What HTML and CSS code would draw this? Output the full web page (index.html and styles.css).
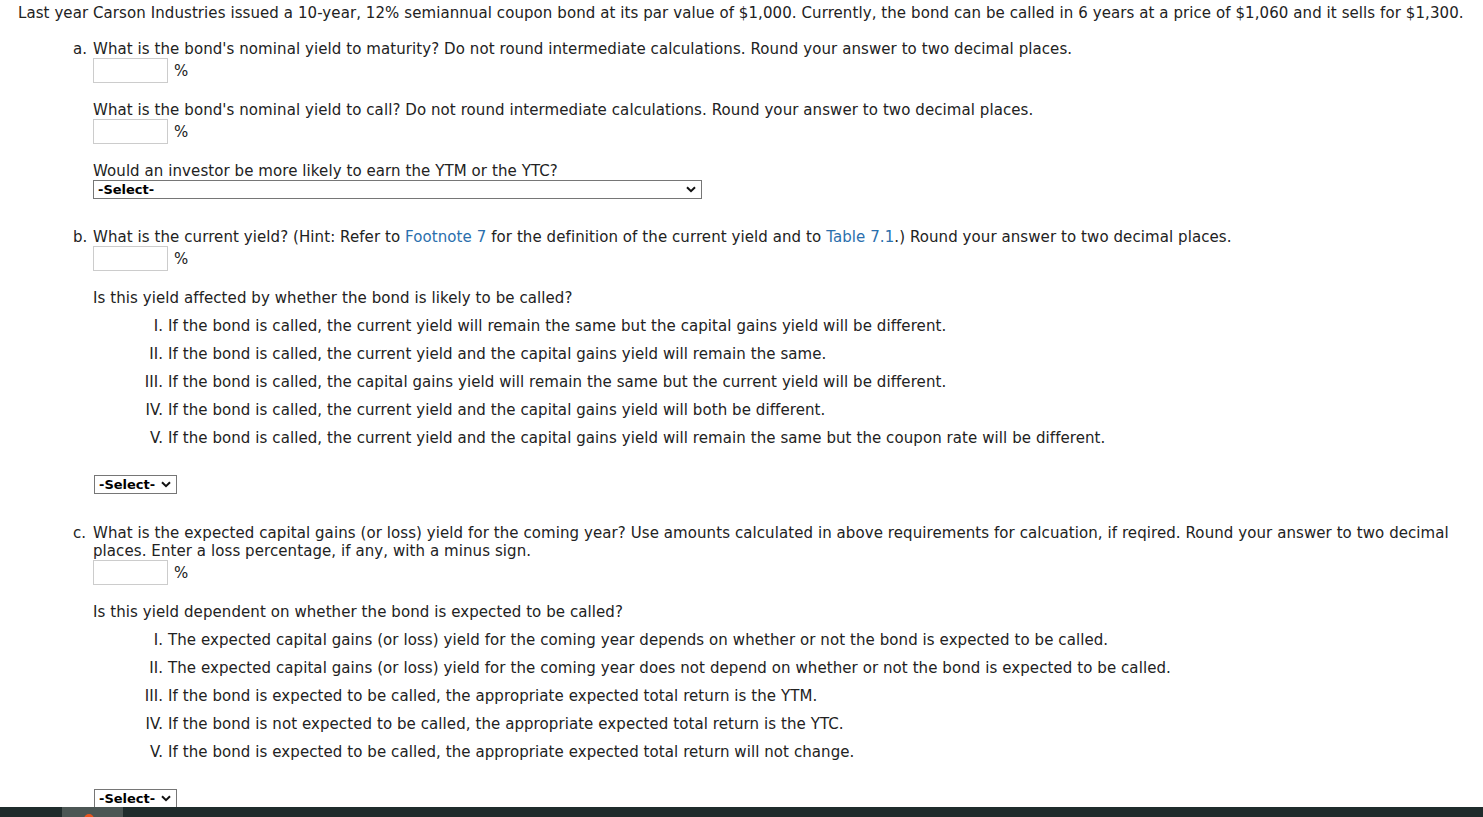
FILE: index.html
```html
<!DOCTYPE html>
<html lang="en">
<head>
<meta charset="utf-8">
<title>Bond yields</title>
<link rel="stylesheet" href="styles.css">
</head>
<body>
<div class="page">
  <p class="intro">Last year Carson Industries issued a 10-year, 12% semiannual coupon bond at its par value of $1,000. Currently, the bond can be called in 6 years at a price of $1,060 and it sells for $1,300.</p>

  <div class="part">
    <span class="label">a.</span>
    <div class="body">
      <p class="q">What is the bond's nominal yield to maturity? Do not round intermediate calculations. Round your answer to two decimal places.</p>
      <div class="answer"><input type="text" class="num"><span class="pct">%</span></div>

      <p class="q gap">What is the bond's nominal yield to call? Do not round intermediate calculations. Round your answer to two decimal places.</p>
      <div class="answer"><input type="text" class="num"><span class="pct">%</span></div>

      <p class="q gap">Would an investor be more likely to earn the YTM or the YTC?</p>
      <span class="sel-wrap wide">
        <select class="sel"><option>-Select-</option></select>
        <svg class="chev" width="10" height="7" viewBox="0 0 10 7"><path d="M1 1.2 L5 5.2 L9 1.2" fill="none" stroke="#111" stroke-width="2"/></svg>
      </span>
    </div>
  </div>

  <div class="part b-part">
    <span class="label">b.</span>
    <div class="body">
      <p class="q">What is the current yield? (Hint: Refer to <a href="#" class="link">Footnote 7</a> for the definition of the current yield and to <a href="#" class="link">Table 7.1</a>.) Round your answer to two decimal places.</p>
      <div class="answer"><input type="text" class="num"><span class="pct">%</span></div>

      <p class="q gap">Is this yield affected by whether the bond is likely to be called?</p>
      <ol class="opts">
        <li>If the bond is called, the current yield will remain the same but the capital gains yield will be different.</li>
        <li>If the bond is called, the current yield and the capital gains yield will remain the same.</li>
        <li>If the bond is called, the capital gains yield will remain the same but the current yield will be different.</li>
        <li>If the bond is called, the current yield and the capital gains yield will both be different.</li>
        <li>If the bond is called, the current yield and the capital gains yield will remain the same but the coupon rate will be different.</li>
      </ol>
      <span class="sel-wrap small">
        <select class="sel"><option>-Select-</option></select>
        <svg class="chev" width="10" height="7" viewBox="0 0 10 7"><path d="M1 1.2 L5 5.2 L9 1.2" fill="none" stroke="#111" stroke-width="2"/></svg>
      </span>
    </div>
  </div>

  <div class="part c-part">
    <span class="label">c.</span>
    <div class="body">
      <p class="q">What is the expected capital gains (or loss) yield for the coming year? Use amounts calculated in above requirements for calcuation, if reqired. Round your answer to two decimal places. Enter a loss percentage, if any, with a minus sign.</p>
      <div class="answer"><input type="text" class="num"><span class="pct">%</span></div>

      <p class="q gap">Is this yield dependent on whether the bond is expected to be called?</p>
      <ol class="opts">
        <li>The expected capital gains (or loss) yield for the coming year depends on whether or not the bond is expected to be called.</li>
        <li>The expected capital gains (or loss) yield for the coming year does not depend on whether or not the bond is expected to be called.</li>
        <li>If the bond is expected to be called, the appropriate expected total return is the YTM.</li>
        <li>If the bond is not expected to be called, the appropriate expected total return is the YTC.</li>
        <li>If the bond is expected to be called, the appropriate expected total return will not change.</li>
      </ol>
      <span class="sel-wrap small">
        <select class="sel"><option>-Select-</option></select>
        <svg class="chev" width="10" height="7" viewBox="0 0 10 7"><path d="M1 1.2 L5 5.2 L9 1.2" fill="none" stroke="#111" stroke-width="2"/></svg>
      </span>
    </div>
  </div>
</div>
<div class="footer-bar"><span class="tab"><span class="dot"></span></span></div>
</body>
</html>
```
FILE: styles.css
```css
html, body {
  margin: 0;
  padding: 0;
  background: #fff;
}
body {
  font-family: Verdana, "DejaVu Sans", sans-serif;
  font-size: 15px;
  line-height: 18px;
  letter-spacing: 0.08px;
  color: #222;
}
.page {
  padding: 4px 18px 0 18px;
}
p {
  margin: 0;
}
.intro {
  margin-bottom: 18px;
}
.part {
  display: flex;
  padding-left: 55px;
}
.part.b-part {
  margin-top: 29px;
}
.part.c-part {
  margin-top: 30px;
}
.label {
  width: 20px;
  flex: none;
}
.body {
  flex: 1;
  display: flex;
  flex-direction: column;
  align-items: flex-start;
}
.q.gap {
  margin-top: 18px;
}
.answer {
  display: flex;
  align-items: center;
  height: 25px;
}
.num {
  box-sizing: border-box;
  width: 75px;
  height: 25px;
  border: 1px solid #ccc;
  margin: 0;
  padding: 0 4px;
  font: inherit;
}
.pct {
  margin-left: 6px;
}
.link {
  color: #2a6fad;
  text-decoration: none;
}
.sel-wrap {
  position: relative;
  display: block;
  height: 19px;
}
.sel-wrap.wide {
  width: 609px;
}
.sel-wrap.small {
  width: 83px;
  margin-left: 1px;
}
.sel {
  -webkit-appearance: none;
  appearance: none;
  box-sizing: border-box;
  display: block;
  width: 100%;
  height: 19px;
  margin: 0;
  font-family: Verdana, "DejaVu Sans", sans-serif;
  font-size: 13px;
  font-weight: bold;
  letter-spacing: 0;
  color: #000;
  border: 1px solid #767676;
  border-radius: 0;
  background: #fff;
  padding: 0 18px 0 4px;
  line-height: 17px;
}
.chev {
  position: absolute;
  right: 6px;
  top: 6px;
  pointer-events: none;
}
.opts {
  list-style-type: upper-roman;
  margin: 10px 0 0 0;
  padding-left: 75px;
}
.opts li {
  margin-bottom: 10px;
}
.opts + .sel-wrap {
  margin-top: 18px;
}
.footer-bar {
  position: fixed;
  left: 0;
  right: 0;
  bottom: 0;
  height: 10px;
  background: #1f2c2c;
}
.footer-bar .tab {
  position: absolute;
  left: 62px;
  top: 0;
  width: 61px;
  height: 10px;
  background: #4b5654;
  overflow: hidden;
}
.footer-bar .dot {
  position: absolute;
  left: 22px;
  top: 7px;
  width: 10px;
  height: 10px;
  border-radius: 50%;
  background: #e8541e;
}
```
